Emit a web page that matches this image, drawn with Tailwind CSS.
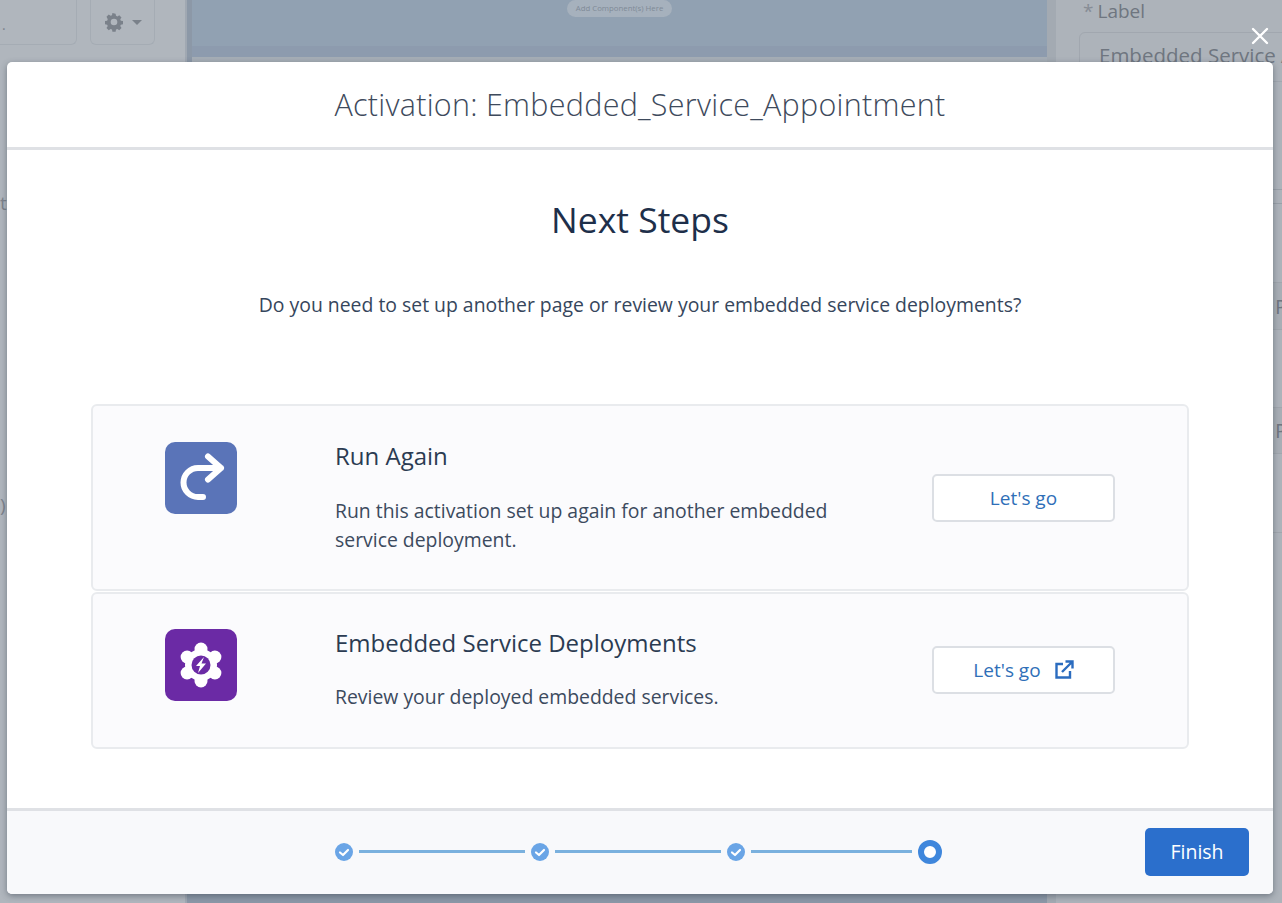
<!DOCTYPE html>
<html lang="en">
<head>
    <meta charset="UTF-8">
    <meta name="viewport" content="width=device-width, initial-scale=1.0">
    <title>Activation: Embedded_Service_Appointment</title>
    <script src="https://cdn.jsdelivr.net/npm/@tailwindcss/browser@4"></script>
</head>
<body class="relative w-[1282px] h-[903px] overflow-hidden bg-[#adb3ba] font-['Open_Sans',sans-serif]">

    <!-- page behind the overlay -->
    <div class="flex h-full w-full">
        <div class="w-[187px] shrink-0 bg-[#b0b6bd] border-r-2 border-[#a0a8b2] text-[#7d838c] text-[19px] leading-[22px]">
            <div class="flex gap-[13px] h-[45px]">
                <div class="w-[77px] h-[45px] border-r border-b border-[#a5acb4] rounded-br-md flex items-end pl-[2px] pb-[9px] text-sm">.</div>
                <div class="w-[65px] h-[45px] border-x border-b border-[#a5acb4] rounded-b-md flex items-center justify-center gap-2">
                    <svg viewBox="0 0 24 24" class="w-[20px] h-[20px]" fill="#7a818a"><path fill-rule="evenodd" d="M13.9 2l.5 2.600 1.700.7 2.200-1.500 2.700 2.700-1.500 2.200.7 1.700 2.600.5v3.800l-2.600.5-.7 1.700 1.500 2.200-2.700 2.700-2.200-1.500-1.700.7-.5 2.600h-3.800l-.5-2.600-1.700-.7-2.200 1.500-2.700-2.700 1.500-2.200-.7-1.700-2.600-.5v-3.800l2.600-.5.7-1.700L3 5.800l2.700-2.700 2.200 1.500 1.700-.7.5-2.600zM12 8a4 4 0 100 8 4 4 0 000-8z"/></svg>
                    <div class="w-0 h-0 border-x-[5px] border-x-transparent border-t-[5px] border-t-[#7a818a]"></div>
                </div>
            </div>
            <div class="mt-[147px]">t</div>
            <div class="mt-[280px]">)</div>
        </div>
        <div class="w-[860px] shrink-0 bg-[#8c98a7] pl-[5px] flex flex-col">
            <div class="h-[46px] bg-[#91a1b2] flex items-start justify-center">
                <div class="h-[17px] px-[9px] rounded-full bg-[#a6b1bd] text-[7.800px] leading-[17px] text-[#7f8a97] whitespace-nowrap">Add Component(s) Here</div>
            </div>
            <div class="h-[11px] bg-[#8d9bae]"></div>
            <div class="h-[10px] bg-[#a6aeb6]"></div>
        </div>
        <div class="flex-1 bg-[#adb3ba] border-l-[9px] border-[#a3aab2] text-[#6f7680] text-[20.500px]">
            <div class="h-[22px] pl-[27px] text-[19px] leading-[22px] flex gap-[4px]"><span class="text-[#868c95]">*</span><span>Label</span></div>
            <div class="ml-[23px] mt-[10px] h-[50px] border border-[#a1a7af] rounded-l-md pl-[19px] pt-[7px] whitespace-nowrap overflow-hidden">Embedded Service A</div>
            <div class="mt-[107px] h-[15px] border-y border-[#99a0a8]"></div>
            <div class="mt-[78px] h-[48px] bg-[#a8aeb5] border-y border-[#a0a6ad] pl-[219px] leading-[46px] whitespace-nowrap overflow-hidden">P</div>
            <div class="mt-[77px] h-[47px] bg-[#a8aeb5] border-y border-[#a0a6ad] pl-[219px] leading-[45px] whitespace-nowrap overflow-hidden">P</div>
            <div class="mt-[78px] h-[1px] bg-[#a0a6ad]"></div>
        </div>
    </div>

    <!-- close -->
    <button class="absolute right-[13px] top-[27px] w-[18px] h-[18px]">
        <svg viewBox="0 0 18 18" class="w-full h-full" stroke="#fff" stroke-width="2.400" stroke-linecap="round"><path d="M2 2l14 14M16 2L2 16"/></svg>
    </button>

    <!-- modal -->
    <div class="absolute left-[7px] top-[62px] w-[1266px] h-[832px] flex flex-col bg-white rounded-[5px] shadow-[0_2px_6px_rgba(40,50,65,0.45)]">
        <header class="h-[88px] shrink-0 border-b-[3px] border-[#dfe1e5] flex items-center justify-center">
            <h2 class="text-[30.500px] font-light text-[#3e4a5c] tracking-[0.27px]">Activation: Embedded_Service_Appointment</h2>
        </header>

        <main class="flex-1 px-[84px] flex flex-col">
            <h1 class="mt-[45px] text-center text-[35.500px] leading-[48px] text-[#1e2f4a]">Next Steps</h1>
            <p class="mt-[47px] text-center text-[19.400px] leading-[30px] text-[#36465c]">Do you need to set up another page or review your embedded service deployments?</p>

            <div class="mt-[84px] flex flex-col gap-[1px]">
                <section class="h-[187px] flex bg-[#fbfbfd] border-2 border-[#e9ebee] rounded-[6px]">
                    <div class="w-[242px] shrink-0 pl-[72px] pt-[36px]">
                        <div class="w-[72px] h-[72px] rounded-[10px] bg-[#5a74b8]">
                            <svg viewBox="0 0 72 72" class="w-[72px] h-[72px]" fill="none" stroke="#fff" stroke-width="6" stroke-linecap="round" stroke-linejoin="round"><path d="M38 55H33a14.500 14.500 0 010-29H56M43 14.500L56 26 43 37.500"/></svg>
                        </div>
                    </div>
                    <div class="w-[597px] shrink-0 pt-[32px]">
                        <h3 class="text-[24px] leading-[36px] text-[#2b3b52]">Run Again</h3>
                        <p class="mt-[22px] w-[510px] text-[19.400px] leading-[29px] text-[#3c4a5e]">Run this activation set up again for another embedded service deployment.</p>
                    </div>
                    <div class="pt-[68px]">
                        <button class="w-[183px] h-[48px] bg-white border-2 border-[#dcdfe4] rounded-[5px] text-[19px] text-[#2f6fb8]">Let's go</button>
                    </div>
                </section>

                <section class="h-[157px] flex bg-[#fbfbfd] border-2 border-[#e9ebee] rounded-[6px]">
                    <div class="w-[242px] shrink-0 pl-[72px] pt-[35px]">
                        <div class="w-[72px] h-[72px] rounded-[10px] bg-[#6b2aa5]">
                            <svg viewBox="0 0 72 72" class="w-[72px] h-[72px]">
                                <g fill="#fff">
                                    <circle cx="36" cy="36" r="16"/>
                                    <circle cx="36" cy="20" r="6.500"/>
                                    <circle cx="36" cy="52" r="6.500"/>
                                    <circle cx="22.100" cy="28" r="6.500"/>
                                    <circle cx="49.900" cy="28" r="6.500"/>
                                    <circle cx="22.100" cy="44" r="6.500"/>
                                    <circle cx="49.900" cy="44" r="6.500"/>
                                </g>
                                <circle cx="36" cy="36" r="9.500" fill="#6b2aa5"/>
                                <path fill="#fff" d="M39 28l-8 9h4l-2 7 8-9.500h-4.500z"/>
                            </svg>
                        </div>
                    </div>
                    <div class="w-[597px] shrink-0 pt-[31px]">
                        <h3 class="text-[24px] leading-[36px] text-[#2b3b52]">Embedded Service Deployments</h3>
                        <p class="mt-[21px] w-[510px] text-[19.400px] leading-[29px] text-[#3c4a5e]">Review your deployed embedded services.</p>
                    </div>
                    <div class="pt-[52px]">
                        <button class="w-[183px] h-[48px] bg-white border-2 border-[#dcdfe4] rounded-[5px] text-[19px] text-[#2f6fb8] flex items-center justify-center gap-[13px]">
                            Let's go
                            <svg viewBox="0 0 20 20" class="w-[20px] h-[20px]" fill="none" stroke="#2b6cbf" stroke-width="2.400"><path d="M9 4H2.500v13.500H16V11"/><path d="M8 12L18 2M11.500 1.500h7v7"/></svg>
                        </button>
                    </div>
                </section>
            </div>
        </main>

        <footer class="h-[86px] shrink-0 bg-[#f8f9fb] border-t-[3px] border-[#dfe1e5] rounded-b-[5px] flex items-center pl-[328px] pb-[2px]">
            <span class="w-[18px] h-[18px] rounded-full bg-[#6aa5e6]">
                <svg viewBox="0 0 18 18" class="w-[18px] h-[18px]" fill="none" stroke="#fff" stroke-width="2.200" stroke-linecap="round" stroke-linejoin="round"><path d="M5 9.500l3 2.500 5-5"/></svg>
            </span>
            <span class="ml-[6px] w-[166px] h-[3px] bg-[#7ab1de]"></span>
            <span class="ml-[6px] w-[18px] h-[18px] rounded-full bg-[#6aa5e6]">
                <svg viewBox="0 0 18 18" class="w-[18px] h-[18px]" fill="none" stroke="#fff" stroke-width="2.200" stroke-linecap="round" stroke-linejoin="round"><path d="M5 9.500l3 2.500 5-5"/></svg>
            </span>
            <span class="ml-[6px] w-[166px] h-[3px] bg-[#7ab1de]"></span>
            <span class="ml-[6px] w-[18px] h-[18px] rounded-full bg-[#6aa5e6]">
                <svg viewBox="0 0 18 18" class="w-[18px] h-[18px]" fill="none" stroke="#fff" stroke-width="2.200" stroke-linecap="round" stroke-linejoin="round"><path d="M5 9.500l3 2.500 5-5"/></svg>
            </span>
            <span class="ml-[6px] w-[161px] h-[3px] bg-[#7ab1de]"></span>
            <span class="ml-[6px] w-[24px] h-[24px] rounded-full bg-white border-[6px] border-[#3f87dc]"></span>
            <button class="ml-[203px] w-[104px] h-[48px] rounded-[5px] bg-[#2b6fcc] text-white text-[19.500px]">Finish</button>
        </footer>
    </div>
</body>
</html>
